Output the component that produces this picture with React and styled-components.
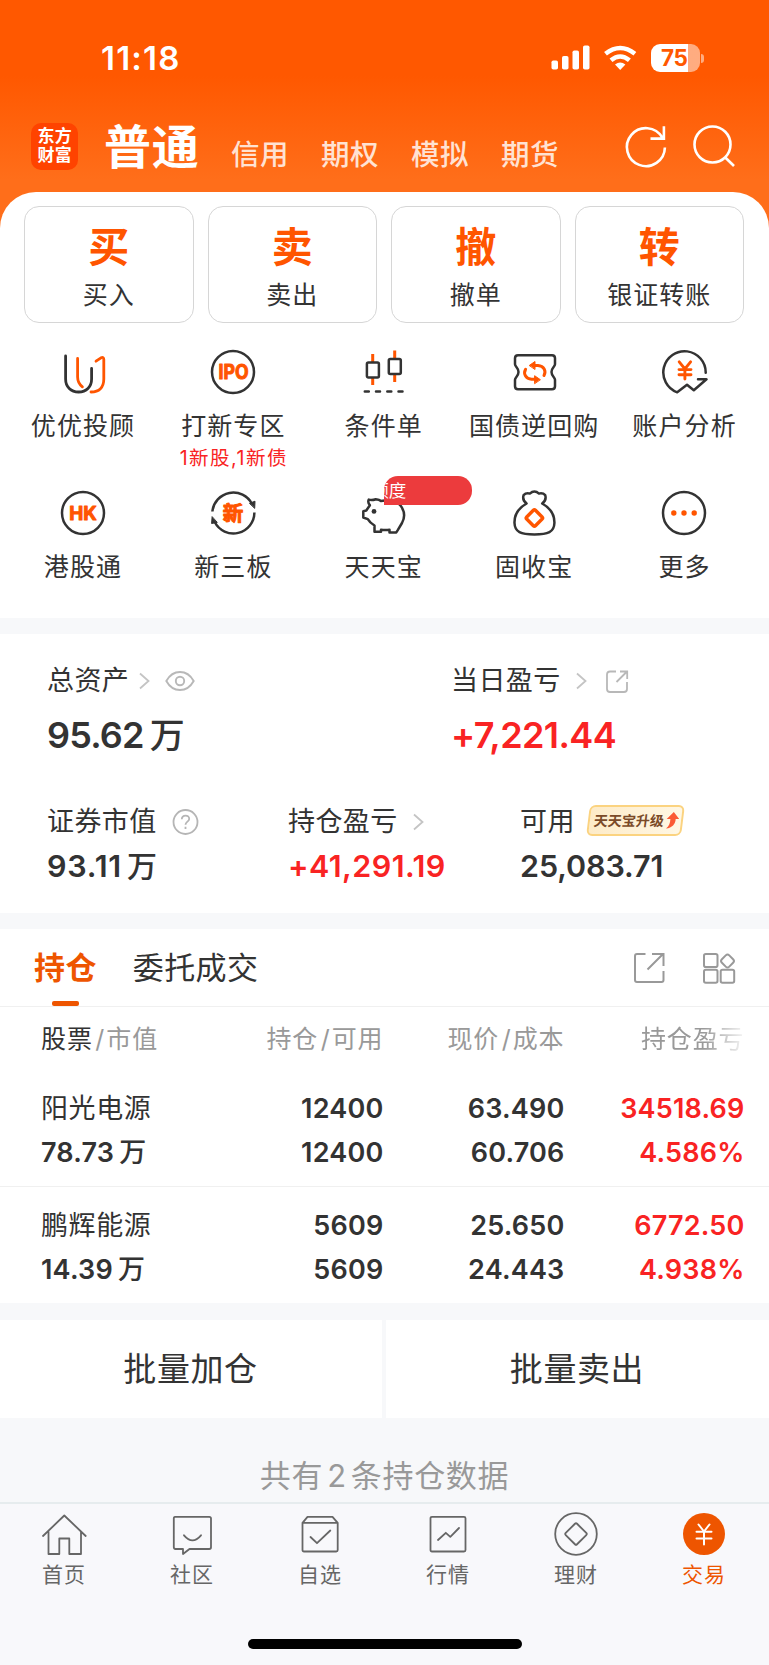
import React from "react";
import styled, { createGlobalStyle } from "styled-components";

const ORANGE = "#ff5500";
const DEEP_ORANGE = "#ee5500";
const INK = "#333333";
const RED = "#f92323";
const GREY = "#999999";

const GlobalStyle = createGlobalStyle`
  * { box-sizing: border-box; }
  body {
    margin: 0;
    background: #f7f8fa;
    color: ${INK};
    font-family: Inter, "Noto Sans CJK SC", sans-serif;
    white-space: nowrap;
  }
  svg { display: block; flex: none; }
`;

const Page = styled.div`
  width: 769px;
  height: 1665px;
  overflow: hidden;
  display: flex;
  flex-direction: column;
`;

/* ---------- header ---------- */
const Header = styled.header`
  height: 242px;
  margin-bottom: -50px;
  flex: none;
  background: linear-gradient(180deg, #ff5800 0, #ff5800 76px, #ff6e1a 180px);
`;

const StatusBar = styled.div`
  height: 116px;
  padding: 0 65px 0 101px;
  display: flex;
  align-items: center;
`;

const Clock = styled.div`
  flex: 1;
  color: #fff;
  font-size: 33px;
  font-weight: 600;
  letter-spacing: 1.2px;
  line-height: 40px;
`;

const StatusIcons = styled.div`
  display: flex;
  align-items: center;
`;

const Battery = styled.div`
  width: 49px;
  height: 28px;
  margin-left: 14px;
  border-radius: 9px;
  background: linear-gradient(90deg, #fff 0 36.5px, rgba(255, 255, 255, 0.5) 36.5px);
  color: #ff5800;
  font-size: 22.5px;
  font-weight: 700;
  line-height: 28px;
  padding-left: 10.5px;
  letter-spacing: -0.3px;
`;

const BatteryTip = styled.div`
  width: 3px;
  height: 9px;
  margin-left: 1.5px;
  border-radius: 0 4px 4px 0;
  background: rgba(255, 255, 255, 0.5);
`;

const NavBar = styled.nav`
  height: 60px;
  padding: 0 32px 0 31px;
  display: flex;
  align-items: center;
`;

const Logo = styled.div`
  width: 47px;
  height: 47px;
  border-radius: 10px;
  background: #ff4300;
  color: #fff;
  font-size: 17px;
  font-weight: 700;
  line-height: 19.5px;
  letter-spacing: 0.2px;
  padding: 4px 0 0 6.5px;
`;

const ActiveAccount = styled.div`
  margin-left: 26px;
  width: 127px;
  padding-top: 1px;
  color: #fff;
  font-size: 47px;
  font-weight: 700;
  letter-spacing: 0.8px;
  line-height: 56px;
`;

const Account = styled.div`
  width: 90px;
  padding-top: 17px;
  color: rgba(255, 255, 255, 0.82);
  font-size: 28.5px;
  letter-spacing: 0.5px;
  line-height: 36px;
  font-weight: 500;
`;

const NavIcons = styled.div`
  margin-left: auto;
  display: flex;
  gap: 19px;
`;

/* ---------- trade panel ---------- */
const TradePanel = styled.section`
  position: relative;
  height: 426px;
  flex: none;
  padding-top: 14px;
  border-radius: 36px 36px 0 0;
  background: #fff;
`;

const CardGrid = styled.div`
  display: grid;
  grid-template-columns: repeat(4, 1fr);
  gap: 14px;
  padding: 0 25px 0 24px;
`;

const ActionCard = styled.div`
  height: 117px;
  padding-top: 14px;
  border: 1px solid #d6d6d6;
  border-radius: 15px;
  text-align: center;
`;

const ActionGlyph = styled.div`
  color: ${ORANGE};
  font-size: 41px;
  font-weight: 700;
  line-height: 52px;
`;

const ActionLabel = styled.div`
  font-size: 25px;
  letter-spacing: 1px;
  line-height: 30px;
  margin-top: 7px;
`;

const ServiceGrid = styled.div`
  display: grid;
  grid-template-columns: repeat(5, 150.4px);
  grid-auto-rows: 141px;
  padding: 24.7px 0 0 7.5px;
`;

const Service = styled.div`
  position: relative;
  display: flex;
  flex-direction: column;
  align-items: center;
`;

const ServiceLabel = styled.div`
  margin-top: 14px;
  font-size: 25px;
  letter-spacing: 1.1px;
  line-height: 32px;
  padding-left: 0.6px;
`;

const ServiceNote = styled.div`
  margin-top: 4px;
  color: ${RED};
  font-size: 19.5px;
  letter-spacing: 1.5px;
  line-height: 24px;
  padding-left: 1.5px;
`;

const QuotaBadge = styled.div`
  position: absolute;
  left: 75.5px;
  top: -12.5px;
  width: 88.5px;
  height: 29px;
  overflow: hidden;
  border-radius: 14px 14px 14px 0;
  background: #ec3b3d;
  color: #fff;
  font-size: 17.5px;
  line-height: 29px;
  text-indent: -12.5px;
`;

/* ---------- assets ---------- */
const Assets = styled.section`
  height: 279px;
  flex: none;
  margin-top: 16px;
  padding: 31px 0 0 47px;
  background: #fff;
`;

const AssetRow = styled.div`
  display: grid;
  grid-template-columns: ${(p) => p.$columns};
  height: ${(p) => p.$height};
`;

const AssetLabel = styled.div`
  display: flex;
  align-items: center;
  height: 32px;
  font-size: 27px;
  letter-spacing: 0.4px;
  line-height: 32px;
`;

const AssetValue = styled.div`
  margin-top: ${(p) => (p.$large ? "18px" : "10px")};
  color: ${(p) => (p.$gain ? RED : INK)};
  font-size: ${(p) => (p.$large ? "36px" : "30.5px")};
  font-weight: 600;
  letter-spacing: ${(p) => p.$spacing};
  line-height: ${(p) => (p.$large ? "40px" : "36px")};
`;

const Unit = styled.span`
  margin-left: ${(p) => p.$gap || "5px"};
  font-weight: 500;
  font-size: ${(p) => p.$size};
`;

const UpgradeTag = styled.div`
  display: flex;
  align-items: center;
  width: 95px;
  height: 31px;
  margin: -4px 0 0 13px;
  padding-left: 4px;
  border: 2px solid #fbd380;
  border-radius: 6px;
  background: linear-gradient(90deg, #fdebc8, #fff7e4);
  transform: skewX(-7deg);
  color: #7a4a28;
  font-size: 14px;
  font-weight: 700;
  letter-spacing: 0;
`;

/* ---------- holdings ---------- */
const Holdings = styled.section`
  height: 374px;
  flex: none;
  margin-top: 16px;
  background: #fff;
`;

const Tabs = styled.div`
  display: flex;
  height: 78px;
  padding: 0 33px 0 34px;
  border-bottom: 1px solid #f0f0f0;
`;

const Tab = styled.div`
  display: flex;
  flex-direction: column;
  align-items: center;
  padding-top: 21px;
  margin-right: 36px;
  color: ${(p) => (p.$active ? DEEP_ORANGE : INK)};
  font-size: 31px;
  font-weight: ${(p) => (p.$active ? 700 : 400)};
  letter-spacing: 0.4px;
  line-height: 36px;
`;

const TabMark = styled.div`
  width: 27px;
  height: 5.5px;
  margin-top: 15px;
  border-radius: 2px;
  background: ${DEEP_ORANGE};
`;

const TabTools = styled.div`
  display: flex;
  align-items: center;
  gap: 37px;
  margin-left: auto;
`;

const TableRow = styled.div`
  display: grid;
  grid-template-columns: 162px 180.5px 181px 180px;
  padding-left: 41px;
`;

const TableHead = styled(TableRow)`
  height: 65px;
  color: ${GREY};
  font-size: 25px;
  letter-spacing: 0.9px;
  line-height: 64px;
`;

const HeadCell = styled.div`
  text-align: ${(p) => (p.$left ? "left" : "right")};
`;

const HeadSort = styled.span`
  color: ${INK};
`;

const Slash = styled.span`
  margin: 0 1px 0 2.5px;
`;

const FadingHead = styled(HeadCell)`
  -webkit-mask-image: linear-gradient(90deg, #000 77%, transparent 102%);
  mask-image: linear-gradient(90deg, #000 77%, transparent 102%);
`;

const Holding = styled(TableRow)`
  height: ${(p) => (p.$first ? "115px" : "116px")};
  padding-top: ${(p) => (p.$first ? "15px" : "16.5px")};
  border-bottom: ${(p) => (p.$first ? "1px solid #f0f0f0" : "0")};
`;

const StockName = styled.div`
  font-size: 27px;
  letter-spacing: 0.6px;
  line-height: 44px;
`;

const Figure = styled.div`
  color: ${(p) => (p.$gain ? RED : INK)};
  text-align: ${(p) => (p.$left ? "left" : "right")};
  font-size: 27px;
  font-weight: 600;
  letter-spacing: 0.2px;
  line-height: 44px;
`;

/* ---------- footer ---------- */
const BatchBar = styled.div`
  display: grid;
  grid-template-columns: 382px 383px;
  gap: 4px;
  height: 97px;
  flex: none;
  margin-top: 17px;
`;

const BatchButton = styled.div`
  padding-right: 1px;
  background: #fff;
  text-align: center;
  font-size: 33px;
  letter-spacing: 0.6px;
  line-height: 98px;
`;

const Summary = styled.div`
  height: 85px;
  flex: none;
  padding-top: 38px;
  color: ${GREY};
  font-size: 31px;
  letter-spacing: 0.7px;
  line-height: 41px;
  text-align: center;
`;

const Count = styled.span`
  margin: 0 4px;
`;

const BottomBar = styled.footer`
  flex: 1;
  border-top: 2px solid #e6ecee;
  background: #f8f8fb;
  display: flex;
  flex-direction: column;
`;

const BottomTabs = styled.div`
  display: grid;
  grid-template-columns: repeat(6, 128px);
  height: 135px;
  padding-top: 5.7px;
`;

const BottomTab = styled.div`
  display: flex;
  flex-direction: column;
  align-items: center;
  color: ${(p) => (p.$active ? DEEP_ORANGE : "#666666")};
  font-size: 21px;
  letter-spacing: 0.9px;
  line-height: 26px;
`;

const BottomLabel = styled.span`
  margin-top: 4px;
`;

const HomeIndicator = styled.div`
  width: 274px;
  height: 10px;
  margin-left: 247.5px;
  border-radius: 5px;
  background: #000;
`;

/* ---------- icons ---------- */
const Icon = ({ size = 48, w = 2.5, color = INK, children }) => (
  <svg width={size} height={size} viewBox={`0 0 ${size} ${size}`} fill="none" stroke={color}
    strokeWidth={w} strokeLinecap="round" strokeLinejoin="round">{children}</svg>
);

const GlyphText = ({ x = 24, y, size, width, children }) => (
  <text x={x} y={y} textAnchor="middle" fontSize={size} fontWeight="700" fill={ORANGE} stroke={ORANGE}
    strokeWidth="1" textLength={width} lengthAdjust="spacingAndGlyphs">{children}</text>
);

const Advisor = () => (
  <Icon w={2.8}>
    <path d="M6.600 8V31C6.600 39 12 44 19.600 44S32.600 39 32.600 31V20.500" />
    <path stroke={ORANGE} d="M18.600 10.500V29c0 4.500 1.500 7.200 4.800 9.800M37 13.200l5-3.400q2.800-1.300 2.800 1.700V31C44.800 39.500 40 44 32 44" />
  </Icon>
);

const Ipo = () => (
  <Icon><circle cx="24" cy="24" r="21" /><GlyphText x={24.500} y={31} size={19.500} width={30}>IPO</GlyphText></Icon>
);

const Candles = () => (
  <Icon>
    <path stroke={ORANGE} strokeWidth="3" strokeLinecap="butt" d="M13.700 6v8M13.700 30v7M35.700 2.500v8M35.700 26v8" />
    <rect x="7.900" y="14.500" width="12" height="15" rx="1.500" />
    <rect x="29.800" y="11" width="12" height="15" rx="1.500" />
    <path d="M5.800 43.600h4M17 43.600h4M28.300 43.600h4M39.500 43.600h4" />
  </Icon>
);

const Bond = () => (
  <Icon>
    <path d="M8 7.300h34q3 0 3 3v6c0 2.400-3.500 3.500-3.500 7.700s3.500 5.300 3.500 7.700v6.500q0 3-3 3H8q-3 0-3-3v-6.500c0-2.400 3.500-3.500 3.500-7.700S5 18.700 5 16.300v-6q0-3 3-3z" />
    <g stroke={ORANGE} strokeWidth="3">
      <path d="M24 17.500h4c6 .5 8.500 5.500 6 10M25.600 31.300h-4c-6-.5-8.500-5.500-6-10" />
      <path fill={ORANGE} strokeWidth="1" d="M19.500 17.300l5.500-3.800v7.600zM30.100 31.500l-5.500-3.800v7.600z" />
    </g>
  </Icon>
);

const Analysis = () => (
  <Icon>
    <path d="M45.700 24.700A21.200 21.200 0 1 0 17.200 44.300L27 36.700l6.800 5.600L46.500 31.300H38" />
    <path stroke={ORANGE} strokeWidth="2.900" d="M19.200 13.800l5.700 7 5.700-7M24.900 21v10M19 21.600h12M19 26.700h12" />
  </Icon>
);

const Hk = () => (
  <Icon><circle cx="24" cy="24" r="21" /><GlyphText y={30.800} size={18.500} width={27.500}>HK</GlyphText></Icon>
);

const NewBoard = () => (
  <Icon>
    <path strokeLinecap="butt" d="M3.400 22.500A21 21 0 0 1 43 15M45.400 23.500A21 21 0 0 1 5.700 33" />
    <path fill={INK} strokeWidth="1" d="M40.800 14.200l5.200-2-.3 6.800zM7.900 33.500l-5.300 1 .5-6.500z" />
    <GlyphText y={31.500} size={20} width={20.500}>新</GlyphText>
  </Icon>
);

const Pig = () => (
  <Icon>
    <path d="M9.800 10.600q3 1 7-.4 3.600.2 5.200 1.800 14-3 19.500 4.500c4.500 6 4.500 12 1.500 17.500l-4.400 7.400-1.300 2h-6.800v-2.600q-4 .6-8.500 0v2h-6.500v-6.300Q11 34 8.800 30.200l-4.500-1.700v-6.300l3-.7 3.600-5.300q-2.500-2.600-1.100-5.600z" />
    <circle cx="15" cy="22.400" r="2.400" fill={INK} stroke="none" />
  </Icon>
);

const Purse = () => (
  <Icon>
    <path d="M16.600 14.500q-4.600-3.500-3-8.300 2.300-2.500 6.200-1.600 4.600-4.200 9.200 0 3.900-.9 6.200 1.600 1.600 4.800-3 8.300c8 4.500 12.500 10 12.200 19.500C44.200 43 38 45.400 24.400 45.400S4.800 43 4.500 34C4.200 24.500 8.600 19 16.600 14.500z" />
    <rect x="18.200" y="22.800" width="12.400" height="12.400" rx="1.500" transform="rotate(45 24.400 29)" stroke={ORANGE} strokeWidth="3.400" />
  </Icon>
);

const More = () => (
  <Icon>
    <circle cx="24" cy="24" r="21" />
    <g fill={ORANGE} stroke="none"><circle cx="13.800" cy="24" r="2.700" /><circle cx="24" cy="24" r="2.700" /><circle cx="34.200" cy="24" r="2.700" /></g>
  </Icon>
);

const ChevronArt = styled.svg`
  margin-left: ${(p) => p.$gap};
`;

const Chevron = ({ gap }) => (
  <ChevronArt $gap={gap} width="11" height="18" viewBox="0 0 11 18" fill="none" stroke="#c4c4c4" strokeWidth="1.800">
    <path d="M1 1.500l8.500 7.500L1 16.500" />
  </ChevronArt>
);

const EyeArt = styled.svg`
  margin-left: 15px;
`;

const Eye = () => (
  <EyeArt width="30" height="22" viewBox="0 0 30 22" fill="none" stroke="#b8b8b8" strokeWidth="1.900">
    <path d="M1.300 11C8-1 22-1 28.700 11 22 23 8 23 1.300 11z" /><circle cx="15" cy="11" r="4.200" />
  </EyeArt>
);

const ShareArt = styled.svg`
  margin-left: 18px;
`;

const SmallShare = () => (
  <ShareArt width="24" height="24" viewBox="0 0 24 24" fill="none" stroke="#b8b8b8" strokeWidth="1.800">
    <path d="M11 2.500H5Q2 2.500 2 5.500V20q0 3 3 3h14q3 0 3-3v-7M11.500 13L22 2.500M15 2.500h7.200v7.500" />
  </ShareArt>
);

const HelpArt = styled.svg`
  margin-left: 15px;
`;

const Help = () => (
  <HelpArt width="27" height="27" viewBox="0 0 27 27" fill="none" stroke="#b5b5b5" strokeWidth="1.800">
    <circle cx="13.500" cy="13" r="12" />
    <path d="M9.800 10.200c.2-5 7.600-4.700 7.400-.2-.2 2.600-3.700 2.900-3.700 5.800M13.500 17.700v2.200" />
  </HelpArt>
);

const TagArrow = styled.svg`
  margin-left: 2px;
`;

const serviceItems = [
  ["优优投顾", Advisor], ["打新专区", Ipo, "1新股,1新债"], ["条件单", Candles], ["国债逆回购", Bond], ["账户分析", Analysis],
  ["港股通", Hk], ["新三板", NewBoard], ["天天宝", Pig], ["固收宝", Purse], ["更多", More],
];

const bottomItems = [
  ["首页", <path key="i" d="M3 26L24.300 5.500 45.700 26M8.500 21.500V44H19.300V28.500H29.300V44H41V21.500" />],
  ["社区", <path key="i" d="M7 6.800H41.300q1.700 0 1.700 1.700V37.300q0 1.700-1.700 1.700H21.500l-6.500 5V39H7.500q-1.700 0-1.700-1.700V8.500q0-1.700 1.200-1.700zM16 25.300q8.500 10 17 0" />],
  ["自选", <path key="i" d="M6.500 12.800L11.500 6.800H36.500L41.700 12.800V40q0 1.500-1.500 1.500H8q-1.500 0-1.500-1.500V12.800H41.700M14.500 27l6.500 6.200L34.300 20.500" />],
  ["行情", <path key="i" d="M8 6.800H40q1.500 0 1.500 1.500V40q0 1.500-1.500 1.500H8q-1.500 0-1.500-1.500V8.300q0-1.500 1.500-1.500zM14 30l7.800-7.200 4.500 4L35 18" />],
  ["理财", <g key="i"><circle cx="24" cy="24" r="20.800" /><rect x="16" y="16" width="16" height="16" rx="1.500" transform="rotate(45 24 24)" /></g>],
  ["交易", <g key="i"><circle cx="24" cy="24" r="21" fill={DEEP_ORANGE} stroke="none" /><path stroke="#fff" strokeWidth="2" d="M18.500 14.500l5.500 7 5.500-7M24 21.500v13M16.500 21.800h15M16.500 28.600h15" /></g>],
];

const stocks = [
  { name: "阳光电源", value: "78.73", held: "12400", usable: "12400", price: "63.490", cost: "60.706", gain: "34518.69", rate: "4.586%" },
  { name: "鹏辉能源", value: "14.39", held: "5609", usable: "5609", price: "25.650", cost: "24.443", gain: "6772.50", rate: "4.938%" },
];

export default function App() {
  return (
    <Page>
      <GlobalStyle />
      <Header>
        <StatusBar>
          <Clock>11:18</Clock>
          <StatusIcons>
            <svg width="86" height="26" viewBox="0 0 86 26" fill="#fff">
              <rect x="0.500" y="15.500" width="6.500" height="9" rx="1.800" /><rect x="11" y="11" width="6.500" height="13.500" rx="1.800" />
              <rect x="21.500" y="5.500" width="6.500" height="19" rx="1.800" /><rect x="32" y="0.500" width="6.500" height="24" rx="1.800" />
              <g fill="none" stroke="#fff" strokeWidth="4.600"><path d="M54.500 8.700q14.700-11.400 29.400 0M60 15.200q9.200-7.400 18.400 0" /></g>
              <path d="M64 19.600q5.200-4.200 10.400 0L69.200 25z" />
            </svg>
            <Battery>75</Battery>
            <BatteryTip />
          </StatusIcons>
        </StatusBar>
        <NavBar>
          <Logo>东方<br />财富</Logo>
          <ActiveAccount>普通</ActiveAccount>
          {["信用", "期权", "模拟", "期货"].map((name) => <Account key={name}>{name}</Account>)}
          <NavIcons>
            <svg width="48" height="48" viewBox="0 0 48 48" fill="none" stroke="#fff" strokeWidth="2.600">
              <path d="M42.900 25.500A19 19 0 1 1 40.300 15.500M28.500 16.600H41.900V4.300" />
            </svg>
            <svg width="48" height="48" viewBox="0 0 48 48" fill="none" stroke="#fff" strokeWidth="2.600">
              <circle cx="23.500" cy="22.500" r="18" /><path d="M36 35.200L45 44" />
            </svg>
          </NavIcons>
        </NavBar>
      </Header>

      <TradePanel>
        <CardGrid>
          {[["买", "买入"], ["卖", "卖出"], ["撤", "撤单"], ["转", "银证转账"]].map(([glyph, label]) => (
            <ActionCard key={label}><ActionGlyph>{glyph}</ActionGlyph><ActionLabel>{label}</ActionLabel></ActionCard>
          ))}
        </CardGrid>
        <ServiceGrid>
          {serviceItems.map(([label, Glyph, note]) => (
            <Service key={label}>
              <Glyph />
              {label === "天天宝" && <QuotaBadge>额度</QuotaBadge>}
              <ServiceLabel>{label}</ServiceLabel>
              {note && <ServiceNote>{note}</ServiceNote>}
            </Service>
          ))}
        </ServiceGrid>
      </TradePanel>

      <Assets>
        <AssetRow $columns="404px 1fr" $height="141px">
          <div>
            <AssetLabel>总资产<Chevron gap="10px" /><Eye /></AssetLabel>
            <AssetValue $large $spacing="-0.8px">95.62<Unit $size="35px" $gap="6px">万</Unit></AssetValue>
          </div>
          <div>
            <AssetLabel>当日盈亏<Chevron gap="15px" /><SmallShare /></AssetLabel>
            <AssetValue $large $gain $spacing="-0.6px">+7,221.44</AssetValue>
          </div>
        </AssetRow>
        <AssetRow $columns="241px 232px 1fr" $height="90px">
          <div>
            <AssetLabel>证券市值<Help /></AssetLabel>
            <AssetValue $spacing="0.8px">93.11<Unit $size="30px">万</Unit></AssetValue>
          </div>
          <div>
            <AssetLabel>持仓盈亏<Chevron gap="15px" /></AssetLabel>
            <AssetValue $gain $spacing="0.45px">+41,291.19</AssetValue>
          </div>
          <div>
            <AssetLabel>
              可用
              <UpgradeTag>
                天天宝升级
                <TagArrow width="13" height="17" viewBox="0 0 13 17">
                  <path d="M6.800 0L13 7H9.500C10 12 7 16 1 16.500 4 14 4.500 11 4.200 7H0.500z" fill="#fb5a35" />
                </TagArrow>
              </UpgradeTag>
            </AssetLabel>
            <AssetValue $spacing="-0.1px">25,083.71</AssetValue>
          </div>
        </AssetRow>
      </Assets>

      <Holdings>
        <Tabs>
          <Tab $active>持仓<TabMark /></Tab>
          <Tab>委托成交</Tab>
          <TabTools>
            <svg width="32" height="32" viewBox="0 0 32 32" fill="none" stroke="#999" strokeWidth="2">
              <path d="M12.500 2H4Q2 2 2 4V28q0 2 2 2H28.500q2 0 2-2V19M14.500 17.500L30 2M19 2H30.500V14" />
            </svg>
            <svg width="34" height="32" viewBox="0 0 34 32" fill="none" stroke="#999" strokeWidth="2">
              <rect x="2" y="2" width="13.500" height="13" rx="1.800" /><rect x="2" y="17.800" width="13.500" height="13" rx="1.800" />
              <rect x="18.700" y="17.800" width="13.500" height="13" rx="1.800" /><rect x="20.300" y="3.800" width="10.400" height="10.400" rx="2.500" transform="rotate(45 25.500 9)" />
            </svg>
          </TabTools>
        </Tabs>
        <TableHead>
          <HeadCell $left><HeadSort>股票</HeadSort><Slash>/</Slash>市值</HeadCell>
          <HeadCell>持仓<Slash>/</Slash>可用</HeadCell>
          <HeadCell>现价<Slash>/</Slash>成本</HeadCell>
          <FadingHead>持仓盈亏</FadingHead>
        </TableHead>
        {stocks.map((s, i) => (
          <Holding key={s.name} $first={i === 0}>
            <div><StockName>{s.name}</StockName><Figure $left>{s.value}<Unit $size="27px">万</Unit></Figure></div>
            <div><Figure>{s.held}</Figure><Figure>{s.usable}</Figure></div>
            <div><Figure>{s.price}</Figure><Figure>{s.cost}</Figure></div>
            <div><Figure $gain>{s.gain}</Figure><Figure $gain>{s.rate}</Figure></div>
          </Holding>
        ))}
      </Holdings>

      <BatchBar>
        <BatchButton>批量加仓</BatchButton>
        <BatchButton>批量卖出</BatchButton>
      </BatchBar>
      <Summary>共有<Count>2</Count>条持仓数据</Summary>

      <BottomBar>
        <BottomTabs>
          {bottomItems.map(([label, art]) => (
            <BottomTab key={label} $active={label === "交易"}>
              <Icon w={1.8} color="#666">{art}</Icon>
              <BottomLabel>{label}</BottomLabel>
            </BottomTab>
          ))}
        </BottomTabs>
        <HomeIndicator />
      </BottomBar>
    </Page>
  );
}
